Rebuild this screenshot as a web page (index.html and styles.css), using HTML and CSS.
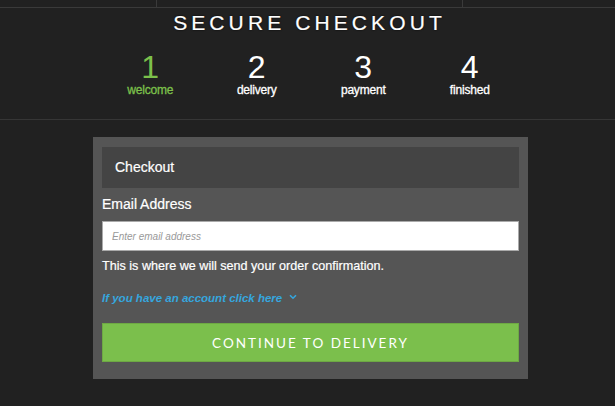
FILE: index.html
```html
<!DOCTYPE html>
<html>
<head>
<meta charset="utf-8">
<link rel="stylesheet" href="styles.css">
</head>
<body>
<div class="topbar">
  <div class="tb-cell tb-left"></div>
  <div class="tb-cell tb-mid"></div>
  <div class="tb-cell tb-right"></div>
</div>
<header class="head">
  <h1 class="title">SECURE CHECKOUT</h1>
  <ol class="steps">
    <li class="step active"><span class="num">1</span><span class="lbl">welcome</span></li>
    <li class="step"><span class="num">2</span><span class="lbl">delivery</span></li>
    <li class="step"><span class="num">3</span><span class="lbl">payment</span></li>
    <li class="step"><span class="num">4</span><span class="lbl">finished</span></li>
  </ol>
</header>
<main class="main">
  <form class="card">
    <div class="card-head">Checkout</div>
    <label class="field-label" for="email">Email Address</label>
    <input class="field" id="email" type="email" placeholder="Enter email address">
    <p class="help">This is where we will send your order confirmation.</p>
    <a class="account" href="#">If you have an account click here
      <svg class="chev" width="8" height="6" viewBox="0 0 8 6"><path d="M1 1.2 L4 4.2 L7 1.2" fill="none" stroke="#35a6de" stroke-width="1.6"/></svg>
    </a>
    <button class="btn" type="button">CONTINUE TO DELIVERY</button>
  </form>
</main>
</body>
</html>
```
FILE: styles.css
```css
* { box-sizing: border-box; }
html, body { margin: 0; padding: 0; }
body {
  background: #212121;
  font-family: "Liberation Sans", Arial, sans-serif;
  color: #fff;
  width: 615px;
  height: 406px;
  overflow: hidden;
}
.topbar {
  display: flex;
  height: 8px;
  border-bottom: 1px solid #3a3a3a;
}
.tb-left { width: 157px; border-right: 1px solid #3a3a3a; }
.tb-mid { width: 306px; border-right: 1px solid #3a3a3a; }
.tb-right { flex: 1; }
.head {
  height: 112px;
  border-bottom: 1px solid #363636;
}
.title {
  margin: 0;
  padding-top: 3px;
  text-align: center;
  font-weight: normal;
  font-size: 21px;
  line-height: 24px;
  letter-spacing: 4.1px;
  padding-left: 4px;
  text-shadow: 0 0 2px #000;
  -webkit-text-stroke: 0.2px #fff;
}
.steps {
  list-style: none;
  margin: 0 0 0 97px;
  padding: 0;
  width: 426px;
  display: grid;
  grid-template-columns: repeat(4, 1fr);
  padding-top: 16px;
}
.step {
  display: flex;
  flex-direction: column;
  align-items: center;
}
.num {
  font-size: 32px;
  line-height: 32px;
}
.lbl {
  font-size: 12px;
  line-height: 14px;
  letter-spacing: -0.2px;
  -webkit-text-stroke: 0.3px currentColor;
}
.active { color: #7cc04b; }
.main {
  padding-top: 17px;
}
.card {
  margin-left: 93px;
  width: 435px;
  background: #555555;
  padding: 10px 9px 17px;
  display: flex;
  flex-direction: column;
}
.card-head {
  background: #444444;
  height: 41px;
  padding-left: 13px;
  font-size: 14px;
  line-height: 41px;
  -webkit-text-stroke: 0.2px #fff;
}
.field-label {
  font-size: 14px;
  margin-top: 7px;
  line-height: 18px;
  -webkit-text-stroke: 0.2px #fff;
}
.field {
  margin-top: 8px;
  height: 30px;
  border: 1px solid #aaa;
  background: #fff;
  padding: 0 9px;
  font-family: "Liberation Sans", Arial, sans-serif;
  font-size: 10px;
  outline: none;
}
.field::placeholder { color: #999; font-style: italic; }
.help {
  margin: 7px 0 0;
  font-size: 12.6px;
  line-height: 16px;
  -webkit-text-stroke: 0.2px #fff;
}
.account {
  margin-top: 17px;
  color: #35a6de;
  font-style: italic;
  font-weight: bold;
  font-size: 11.5px;
  line-height: 14px;
  text-decoration: none;
  display: flex;
  align-items: center;
  gap: 7px;
}
.chev { margin-top: -2px; }
.btn {
  margin-top: 18px;
  height: 39px;
  background: #7bbf4c;
  border: 1px solid #6ea944;
  color: #fff;
  font-family: Lato, "Open Sans", sans-serif;
  font-size: 13.5px;
  letter-spacing: 2px;
  padding: 0;
  cursor: pointer;
}
```
